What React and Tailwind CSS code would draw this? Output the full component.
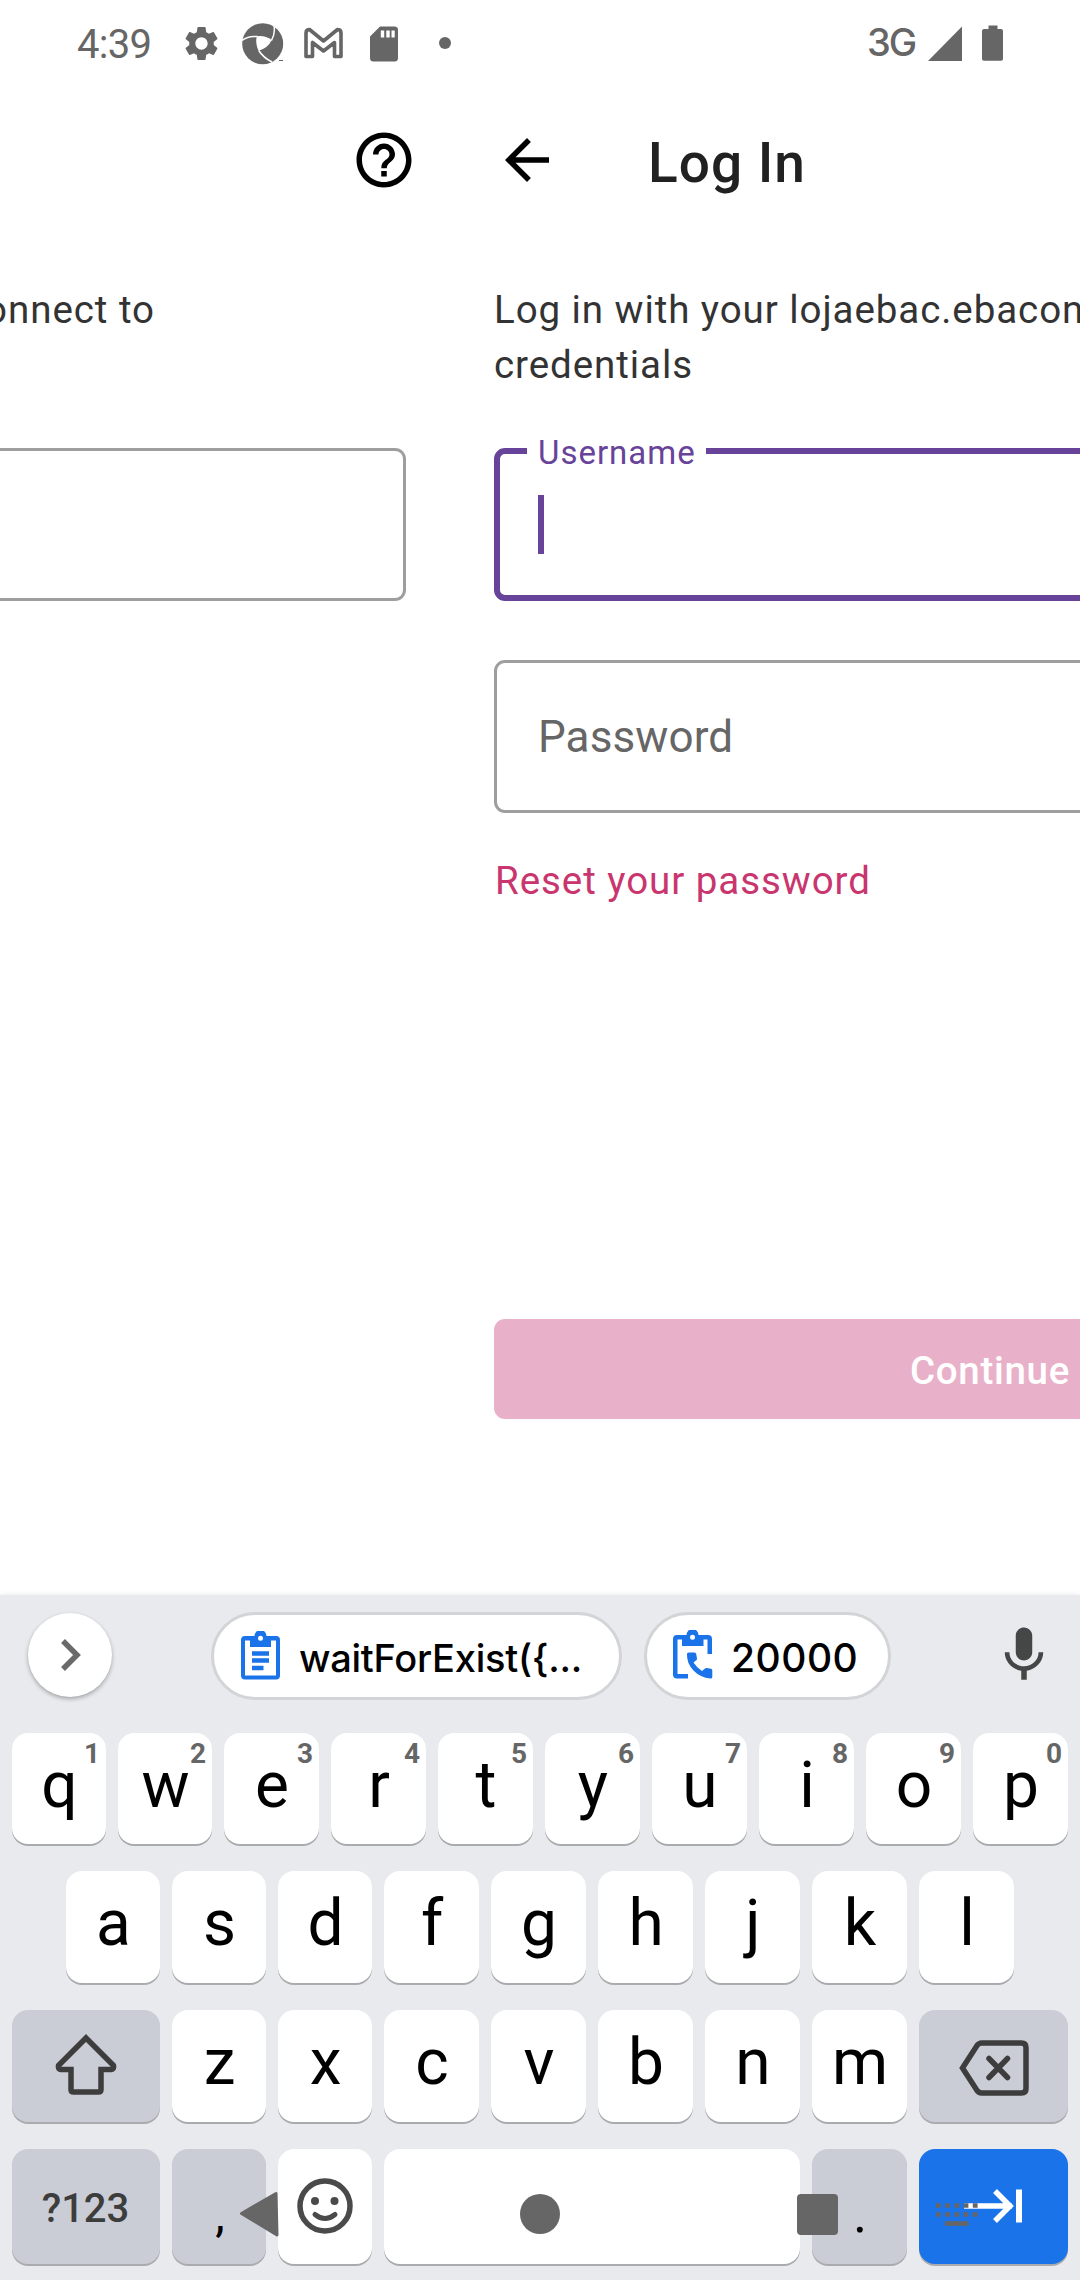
import React from "react";
import { MdHelpOutline, MdArrowBack, MdMic, MdSettings } from "react-icons/md";

function StatusBar() {
  return (
    <div className="flex h-[88px] items-start pl-[77px] text-[#666666]">
      <span className="mt-[21px] w-[108px] text-[40px] leading-[48px] tracking-[-0.7px]">4:39</span>
      <MdSettings className="ml-[-4px] mt-[23px] h-[41px] w-[41px]" />
      <svg className="ml-[20px] mt-[23px] h-[42px] w-[42px]" viewBox="0 0 42 42">
        <circle cx="20.7" cy="20.7" r="20.5" fill="currentColor" />
        <path d="M14.800 13.200Q23 12 29.800 17Q26 25 16.500 27.800Q13 20 14.800 13.200Z" fill="#fff" />
        <path
          d="M0 17.500Q6 12.500 15.500 13.600M32 3Q33.500 10 29.500 17.500M16.800 27.500Q21 34.500 30 39"
          fill="none"
          stroke="#fff"
          strokeWidth="1.5"
        />
        <path d="M37 37.500H41" stroke="currentColor" strokeWidth="1" />
      </svg>
      <svg className="ml-[20px] mt-[27px] h-[32px] w-[39px]" viewBox="0 0 39 32">
        <path
          d="M2 29.500V6Q2 2.500 5.500 2.500L19.500 14 33.500 2.500Q37 2.500 37 6V29.500H30.500V15.500L19.500 24 8.500 15.500V29.500Z"
          fill="none"
          stroke="currentColor"
          strokeWidth="3.600"
          strokeLinejoin="round"
        />
      </svg>
      <svg className="ml-[27px] mt-[26px] h-[36px] w-[28px]" viewBox="0 0 28 36">
        <path
          fillRule="evenodd"
          d="M10 0.500H24.500Q28 0.500 28 4V32Q28 35.500 24.500 35.500H3.500Q0 35.500 0 32V10.500ZM10.800 4.500V11.500H14.200V4.500ZM16.300 4.500V11.500H19.700V4.500ZM21.500 4.500V11.500H24.700V4.500Z"
          fill="currentColor"
        />
      </svg>
      <span className="ml-[41px] mt-[37px] h-[12px] w-[12px] rounded-full bg-[#666666]" />
      <span className="ml-[416px] mt-[18px] w-[61px] font-['Inter','Roboto',sans-serif] text-[38px] font-medium leading-[48px] tracking-[-2px]">
        3G
      </span>
      <svg className="mt-[26px] h-[35px] w-[34px]" viewBox="0 0 34 35">
        <path d="M0 35 34 0.500V35Z" fill="currentColor" />
      </svg>
      <svg className="ml-[20px] mt-[25px] h-[36px] w-[21px]" viewBox="0 0 21 36">
        <path d="M6.500 0.500H15.500V4H19Q21 4 21 6V34Q21 35.700 19 35.700H2Q0 35.700 0 34V6Q0 4 2 4H6.500Z" fill="currentColor" />
      </svg>
    </div>
  );
}

function StorePane() {
  return (
    <div className="flex w-[450px] shrink-0 flex-col overflow-hidden">
      <div className="flex h-[144px] items-center justify-end pr-[33px]">
        <MdHelpOutline className="h-[66px] w-[66px] text-black" />
      </div>
      <p className="mt-[50px] flex h-[110px] w-[155px] justify-end whitespace-nowrap text-[38.5px] leading-[55px] tracking-[0.95px] text-[#333333]">
        connect to
      </p>
      <div className="mt-[56px] h-[153px] w-[406px] rounded-r-[11px] border-[3px] border-l-0 border-[#9e9e9e]" />
    </div>
  );
}

function LoginPane() {
  return (
    <div className="flex w-[1036px] shrink-0 flex-col pl-[44px]">
      <div className="flex h-[144px] items-center">
        <MdArrowBack className="h-[66px] w-[66px] text-black" />
        <h1 className="ml-[88px] pt-[6px] text-[55px] font-medium leading-[64px] tracking-[1px] text-[#212121]">Log In</h1>
      </div>
      <p className="mt-[50px] text-[38.5px] leading-[55px] tracking-[0.93px] text-[#333333]">
        Log in with your lojaebac.ebaconline.art.br
        <br />
        credentials
      </p>
      <div className="relative mt-[56px] h-[153px] rounded-[11px] border-[6px] border-[#674399] pl-[38px] pt-[41px]">
        <span className="absolute left-[27px] top-[-23px] w-[179px] bg-white pl-[11px] text-[33px] leading-[44px] tracking-[1px] text-[#674399]">
          Username
        </span>
        <div className="h-[59px] w-[6px] bg-[#674399]" />
      </div>
      <div className="mt-[59px] flex h-[153px] items-center rounded-[11px] border-[3px] border-[#9e9e9e] pl-[41px] text-[44px] tracking-[0.1px] text-[#666666]">
        Password
      </div>
      <a className="mt-[40px] pl-[1px] text-[38.5px] leading-[55px] tracking-[0.95px] text-[#c9356e]">Reset your password</a>
      <button className="mt-[411px] flex h-[100px] items-center justify-center rounded-[11px] bg-[#e9b1c9] pt-[3px] text-[38.5px] font-medium tracking-[0.7px] text-white">
        Continue
      </button>
    </div>
  );
}

function Key({ label, hint, narrow }) {
  return (
    <div
      className={
        (narrow ? "w-[94px]" : "w-[95px]") +
        " relative flex h-full shrink-0 justify-center rounded-[16px] bg-white pl-[1px] text-[64px] leading-[106px] text-black shadow-[0_2px_0_#a9abae]"
      }
    >
      {label}
      {hint && (
        <span className="absolute right-[6px] top-[5px] text-[28px] font-bold leading-[32px] text-[#666666]">{hint}</span>
      )}
    </div>
  );
}

function SideKey({ children, blue, wide }) {
  return (
    <div
      className={
        (blue ? "bg-[#1a73e8]" : "bg-[#cbcdd6]") +
        (wide ? " w-[149px]" : " w-[148px]") +
        " flex h-full shrink-0 items-center justify-center rounded-[16px] shadow-[0_2px_0_#a9abae]"
      }
    >
      {children}
    </div>
  );
}

function Suggestions() {
  return (
    <div className="flex h-[138px] items-start">
      <div className="ml-[28px] mt-[18px] flex h-[84px] w-[84px] items-center justify-center rounded-full bg-white pl-[2px] shadow-[0_2px_4px_rgba(0,0,0,0.3)]">
        <svg className="h-[34px] w-[22px]" viewBox="0 0 22 34">
          <path d="M3 3 17 17 3 31" fill="none" stroke="#6a6a6a" strokeWidth="5.500" />
        </svg>
      </div>
      <div className="ml-[99px] mt-[17px] flex h-[88px] w-[411px] items-start rounded-full border-[3px] border-[#d3d4d7] bg-white">
        <svg className="ml-[27px] mt-[16px] h-[50px] w-[39px]" viewBox="0 0 39 50">
          <path
            fillRule="evenodd"
            d="M4 5H13.500A6 6 0 0 1 25.500 5H35Q39 5 39 9V44.500Q39 48.500 35 48.500H4Q0 48.500 0 44.500V9Q0 5 4 5ZM4 9.500V44.500H35V9.500H30V16H9V9.500Z"
            fill="#1a73e8"
          />
          <circle cx="19.500" cy="7.200" r="2.500" fill="#fff" />
          <path d="M11 22.500H28M11 29.500H28M11 37H22.500" stroke="#1a73e8" strokeWidth="4.400" />
        </svg>
        <span className="ml-[19px] mt-[18px] whitespace-nowrap font-['Inter','Roboto',sans-serif] text-[38px] font-medium leading-[50px] tracking-[-0.25px] text-black">
          waitForExist({"{"}...
        </span>
      </div>
      <div className="ml-[22px] mt-[17px] flex h-[88px] w-[247px] items-start rounded-full border-[3px] border-[#d3d4d7] bg-white">
        <svg className="ml-[26px] mt-[15px] h-[50px] w-[40px]" viewBox="0 0 40 50">
          <path
            d="M4 5H13.500A6 6 0 0 1 25.500 5H35Q39 5 39 9V24H34.500V9.500H30.500V16H9V9.500H4.500V44H15V48.500H4Q0 48.500 0 44.500V9Q0 5 4 5Z"
            fill="#1a73e8"
          />
          <circle cx="19.500" cy="7.200" r="2.500" fill="#fff" />
          <path
            d="M15.500 22.500H21.500Q23 22.500 23.200 24L24 28.500Q24.200 29.500 23.500 30L20.500 32.500Q24 38 29 41L32 38.500Q33 37.800 34 38L38 38.700Q39.300 39 39.300 40.500V47Q39.300 48.700 37.500 48.500Q27 47.500 20.500 40.500Q13.500 33 14 24Q14 22.500 15.500 22.500Z"
            fill="#1a73e8"
          />
        </svg>
        <span className="ml-[18px] mt-[18px] font-['Inter','Roboto',sans-serif] text-[39px] font-medium leading-[50px] tracking-[0.5px] text-black">
          20000
        </span>
      </div>
      <MdMic className="ml-[100px] mt-[27px] h-[66px] w-[66px] text-[#444746]" />
    </div>
  );
}

function Keyboard() {
  return (
    <div className="flex h-[685px] flex-col bg-[#e8eaed] shadow-[0_0_6px_rgba(0,0,0,0.1)]">
      <Suggestions />
      <div className="flex h-[111px] gap-[12px] px-[12px]">
        {"qwertyuiop".split("").map((k, i) => (
          <Key key={k} label={k} hint={String((i + 1) % 10)} narrow={i < 2} />
        ))}
      </div>
      <div className="mt-[27px] flex h-[112px] gap-[12px] pl-[66px]">
        {"asdfghjkl".split("").map((k, i) => (
          <Key key={k} label={k} narrow={i < 3} />
        ))}
      </div>
      <div className="mt-[27px] flex h-[112px] gap-[12px] px-[12px]">
        <SideKey>
          <svg className="mt-[-4px] h-[62px] w-[62px]" viewBox="0 0 62 62">
            <path
              d="M31 5 58.500 32.500Q59.500 36 56 36.500H46V56.500Q46 59 43.500 59H18.500Q16 59 16 56.500V36.500H6Q2.500 36 3.500 32.500Z"
              fill="none"
              stroke="#3d3d3d"
              strokeWidth="5.500"
            />
          </svg>
        </SideKey>
        {"zxcvbnm".split("").map((k, i) => (
          <Key key={k} label={k} narrow={i < 2} />
        ))}
        <SideKey wide>
          <svg className="mt-[4px] h-[56px] w-[70px]" viewBox="0 0 70 56">
            <path
              d="M3.500 28 18 5.500Q20 3 22.500 3H62.500Q67 3 67 7.500V48.500Q67 53 62.500 53H22.500Q20 53 18 50.500Z"
              fill="none"
              stroke="#3d3d3d"
              strokeWidth="5.500"
            />
            <path d="M30 18.500 48.500 37.500M48.500 18.500 30 37.500" stroke="#3d3d3d" strokeWidth="5.500" strokeLinecap="round" />
          </svg>
        </SideKey>
      </div>
      <div className="relative mt-[27px] flex h-[115px] gap-[12px] pl-[12px]">
        <SideKey>
          <span className="pr-[1px] pt-[5px] text-[40px] font-medium leading-[48px] text-[#3d3d3d]">?123</span>
        </SideKey>
        <div className="flex w-[94px] justify-center rounded-[16px] bg-[#cbcdd6] pl-[2px] text-[48px] leading-[132px] text-black shadow-[0_2px_0_#a9abae]">
          ,
        </div>
        <div className="flex w-[94px] justify-center rounded-[16px] bg-white pt-[29px] shadow-[0_2px_0_#a9abae]">
          <svg className="h-[56px] w-[56px]" viewBox="0 0 56 56">
            <circle cx="28" cy="28" r="25" fill="none" stroke="#4a4a4a" strokeWidth="5.500" />
            <circle cx="18" cy="23" r="4" fill="#4a4a4a" />
            <circle cx="37.500" cy="23" r="4" fill="#4a4a4a" />
            <path d="M18 36.500Q28 44.500 38 36.500" fill="none" stroke="#4a4a4a" strokeWidth="5" strokeLinecap="round" />
          </svg>
        </div>
        <div className="w-[416px] rounded-[16px] bg-white shadow-[0_2px_0_#a9abae]" />
        <div className="flex w-[95px] justify-center rounded-[16px] bg-[#cbcdd6] pl-[1px] text-[54px] leading-[130px] text-black shadow-[0_2px_0_#a9abae]">
          .
        </div>
        <SideKey blue wide>
          <svg className="mt-[-2px] h-[36px] w-[60px]" viewBox="0 0 60 36">
            <path d="M0 18H48M31 3 46 18 31 33" fill="none" stroke="#fff" strokeWidth="5.500" />
            <path d="M55 1.500V34.500" stroke="#fff" strokeWidth="6" />
          </svg>
        </SideKey>
        <svg className="absolute left-[238px] top-[41px] h-[48px] w-[42px]" viewBox="0 0 42 48">
          <path d="M3.500 23.500 38 3.500 39 45Z" fill="#666" stroke="#666" strokeWidth="3" strokeLinejoin="round" />
        </svg>
        <div className="absolute left-[520px] top-[45px] h-[40px] w-[40px] rounded-full bg-[#666666]" />
        <div className="absolute left-[797px] top-[45px] h-[41px] w-[41px] rounded-[4px] bg-[#666666]" />
        <svg className="absolute left-[936px] top-[54px] h-[23px] w-[42px]" viewBox="0 0 42 23">
          <path d="M0 2.500H42M0 11.500H42" stroke="#666" strokeWidth="4.600" strokeDasharray="4.800 4.400" />
          <path d="M9 20.500H32.500" stroke="#666" strokeWidth="4.600" />
        </svg>
      </div>
    </div>
  );
}

export default function App() {
  return (
    <div className="flex h-[2280px] w-[1080px] flex-col overflow-hidden bg-white font-['Roboto',sans-serif]">
      <StatusBar />
      <div className="flex h-[1507px]">
        <StorePane />
        <LoginPane />
      </div>
      <Keyboard />
    </div>
  );
}
